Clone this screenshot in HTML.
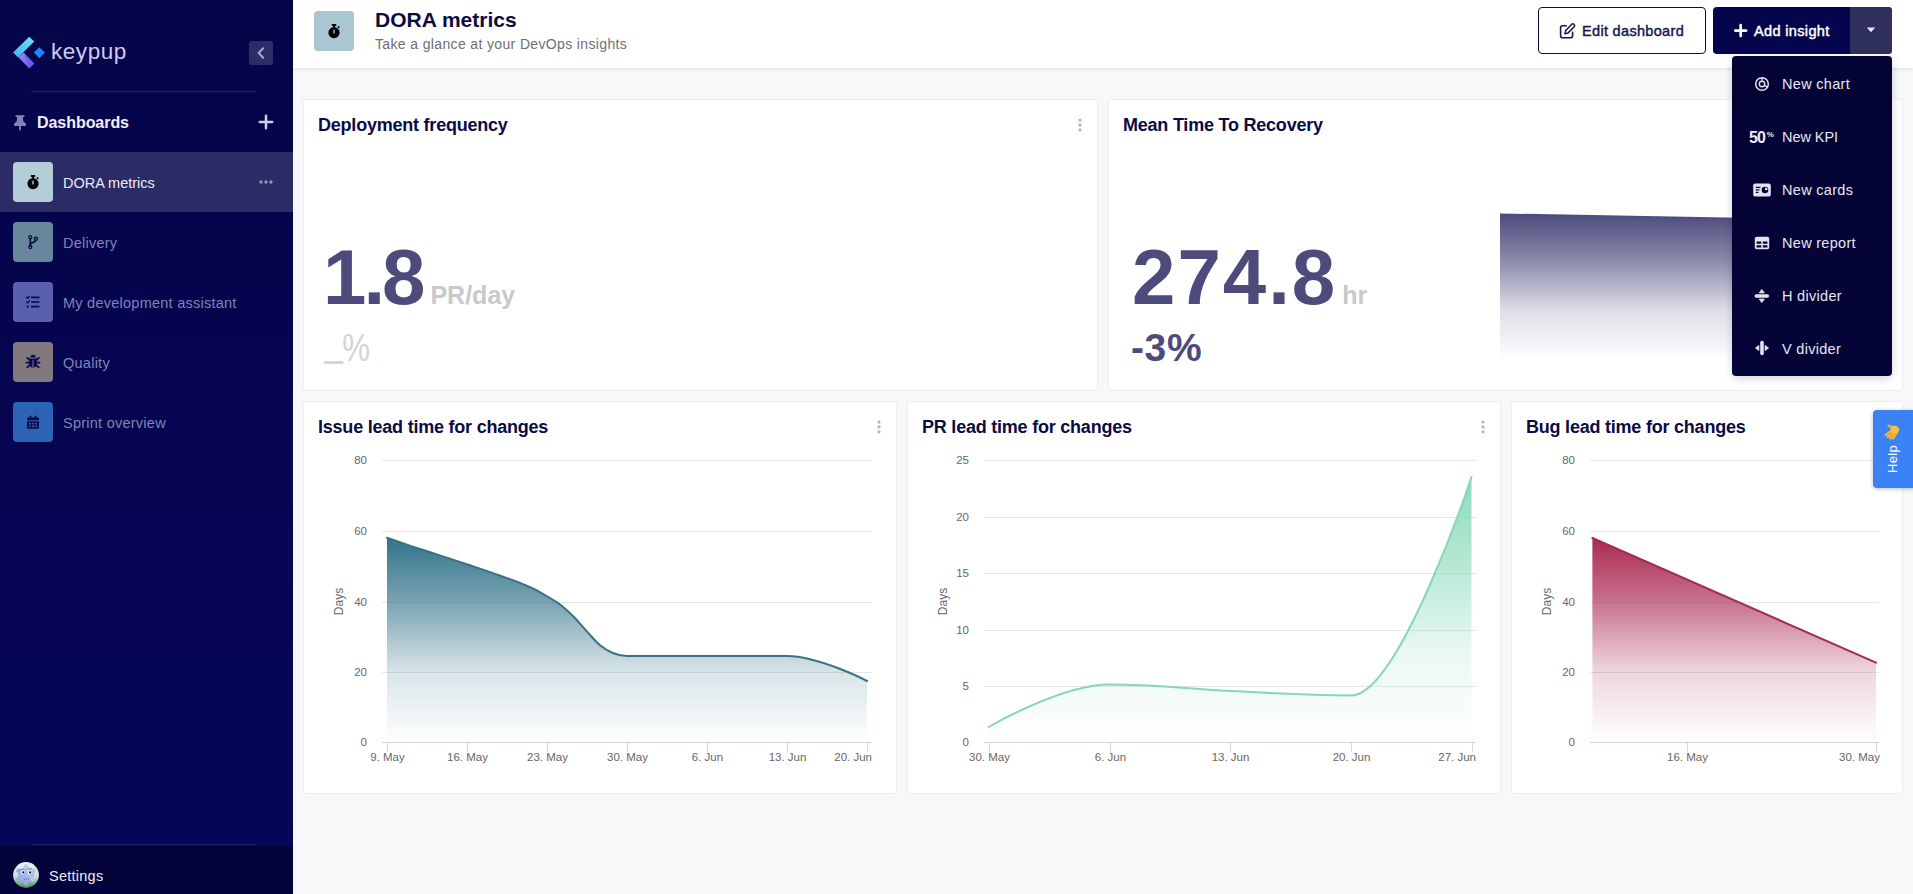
<!DOCTYPE html>
<html lang="en">
<head>
<meta charset="utf-8">
<title>DORA metrics - Keypup</title>
<style>
*{box-sizing:border-box;margin:0;padding:0}
html,body{width:1913px;height:894px;overflow:hidden}
body{font-family:"Liberation Sans",sans-serif;background:#f7f8fa;color:#0b0b45;position:relative}
.abs{position:absolute}
/* SIDEBAR */
#sidebar{position:absolute;left:0;top:0;width:293px;height:894px;background:linear-gradient(180deg,#05054a 0%,#060659 100%);color:#fff}
#sidebar .foot{position:absolute;left:0;top:846px;width:293px;height:48px;background:#03033c}
.hr{position:absolute;height:1px;background:#23236a}
.navitem{position:absolute;left:0;width:293px;height:60px}
.navitem.active{background:#2b2b65}
.navicon{position:absolute;left:13px;top:10px;width:40px;height:40px;border-radius:4px}
.navlabel{position:absolute;left:63px;top:1px;line-height:60px;font-size:14.5px;color:#8182b6;white-space:nowrap;letter-spacing:.25px}
.navitem.active .navlabel{color:#ecebf5;letter-spacing:0}
/* HEADER */
#header{position:absolute;left:293px;top:0;width:1620px;height:68px;background:#fff;box-shadow:0 1px 4px rgba(0,0,0,.11)}
/* CARDS */
.card{position:absolute;background:#fff;border:1px solid #ededee;border-radius:3px}
.ctitle{position:absolute;left:14px;top:15px;font-size:18px;font-weight:700;color:#0b0b45;white-space:nowrap;letter-spacing:-.22px}
.kpi{white-space:nowrap;line-height:90px}
.kpi .big{font-size:78px;font-weight:700;color:#4d4b7c;letter-spacing:-1px}
.kpi .unit{font-size:25px;font-weight:700;color:#c9c9c9;margin-left:8px}
.kdelta{font-size:39px;font-weight:700;color:#4d4b7c;line-height:46px;white-space:nowrap}
.mi{position:absolute;left:50px;font-size:14.500px;line-height:20px;color:#e6e6f2;white-space:nowrap;letter-spacing:.3px}
.kebab{position:absolute;width:4px}
.kebab i{display:block;width:3px;height:3px;border-radius:50%;background:#b9b9b9;margin-bottom:1.5px}
</style>
</head>
<body>
<div id="sidebar">
  <svg class="abs" style="left:10px;top:34px" width="40" height="38" viewBox="10 34 40 38">
    <defs>
      <linearGradient id="lgA" x1="0" y1="1" x2="1" y2="0"><stop offset="0" stop-color="#3fb6f2"/><stop offset="1" stop-color="#6fe0f7"/></linearGradient>
      <linearGradient id="lgB" x1="0" y1="0" x2="1" y2="1"><stop offset="0" stop-color="#9a8cfa"/><stop offset="1" stop-color="#6655e0"/></linearGradient>
    </defs>
    <polygon points="13,52.6 29.3,36.8 34.2,41.6 18.2,57.4" fill="url(#lgA)"/>
    <polygon points="18.4,57.2 23.6,52.4 34.2,63.6 29.3,68.6" fill="url(#lgB)"/>
    <polygon points="23.6,52.4 34.2,63.6 29.3,68.6" fill="#6a58e6" opacity=".55"/>
    <polygon points="39.3,47.2 44.8,52.6 39.3,58.2 33.8,52.6" fill="#2283ff"/>
  </svg>
  <div class="abs" id="logotxt" style="left:51px;top:35px;font-size:22.5px;line-height:34px;color:#cfcbee;letter-spacing:.55px">keypup</div>
  <div class="abs" style="left:249px;top:41px;width:24px;height:24px;border-radius:3px;background:#2c2c66">
    <svg width="24" height="24" viewBox="0 0 24 24"><path d="M14.2 7.2 L9.6 12 L14.2 16.8" fill="none" stroke="#a9a9cf" stroke-width="2" stroke-linecap="round" stroke-linejoin="round"/></svg>
  </div>
  <div class="hr" style="left:31px;top:91px;width:225px"></div>
  <svg class="abs" style="left:12px;top:114px" width="16" height="18" viewBox="0 0 16 18"><path d="M4.2 1.2h7.6a.9.9 0 0 1 0 1.8h-.9l.4 4.6c1.4.7 2.5 1.9 2.8 3.4.1.5-.3.9-.8.9H8.9v3.6a.9.9 0 0 1-1.8 0v-3.600H2.700c-.5 0-.9-.4-.8-.9.3-1.500 1.400-2.700 2.800-3.400l.4-4.600h-.900a.9.9 0 0 1 0-1.800z" fill="#8384b4"/></svg>
  <div class="abs" id="dashlbl" style="left:37px;top:112px;font-size:16px;font-weight:700;line-height:22px;color:#f1f0fa;letter-spacing:-.05px">Dashboards</div>
  <svg class="abs" style="left:258px;top:114px" width="16" height="16" viewBox="0 0 16 16"><path d="M8 1.800v12.400M1.800 8h12.400" stroke="#cfcfe8" stroke-width="2.500" stroke-linecap="round"/></svg>

  <div class="navitem active" style="top:152px">
    <div class="navicon" style="background:#b3ced8"><svg width="40" height="40" viewBox="0 0 40 40"><circle cx="20" cy="21.600" r="5.600" fill="#000"/><rect x="17.600" y="13.100" width="4.800" height="2" rx=".8" fill="#000"/><rect x="19.100" y="13.600" width="1.800" height="3" fill="#000"/><rect x="19.300" y="18.400" width="1.400" height="4.200" rx=".7" fill="#b3ced8"/><rect x="23.600" y="15.400" width="2.200" height="1.600" rx=".6" transform="rotate(45 24.700 16.200)" fill="#000"/></svg></div>
    <div class="navlabel">DORA metrics</div>
    <svg class="abs" style="left:258px;top:27px" width="16" height="6" viewBox="0 0 16 6"><circle cx="3" cy="3" r="1.650" fill="#9494bf"/><circle cx="8" cy="3" r="1.650" fill="#9494bf"/><circle cx="13" cy="3" r="1.650" fill="#9494bf"/></svg>
  </div>
  <div class="navitem" style="top:212px">
    <div class="navicon" style="background:#68879a"><svg width="40" height="40" viewBox="0 0 40 40"><g fill="none" stroke="#0a0a48" stroke-width="1.700"><path d="M17.300 16v8.400"/><path d="M17.300 22.300c0-2 5.600-1 5.600-4.700"/></g><g fill="#68879a" stroke="#0a0a48" stroke-width="1.300"><circle cx="17.300" cy="15.200" r="1.500"/><circle cx="17.300" cy="25" r="1.500"/><circle cx="22.900" cy="16.700" r="1.500"/></g></svg></div>
    <div class="navlabel">Delivery</div>
  </div>
  <div class="navitem" style="top:272px">
    <div class="navicon" style="background:#5a5fae"><svg width="40" height="40" viewBox="0 0 40 40"><g stroke="#0a0a48" stroke-width="1.700" stroke-linecap="round" fill="none"><path d="M18.800 15.400h7M18.800 20h7M18.800 24.600h7"/><path d="M13.600 15.300l1 1 1.800-2.100M13.600 19.900l1 1 1.800-2.100" stroke-width="1.300" stroke-linejoin="round"/></g><circle cx="14.800" cy="24.600" r="1.100" fill="#0a0a48"/></svg></div>
    <div class="navlabel">My development assistant</div>
  </div>
  <div class="navitem" style="top:332px">
    <div class="navicon" style="background:#81797d"><svg width="40" height="40" viewBox="0 0 40 40"><path d="M17.300 15.500a2.700 2.700 0 0 1 5.400 0z" fill="#0a0a48"/><path d="M16.200 16.600h7.600v5.200a3.800 3.800 0 0 1-7.600 0z" fill="#0a0a48"/><g stroke="#0a0a48" stroke-width="1.800" stroke-linecap="round"><path d="M16.200 20.600h-2.800M23.800 20.600h2.800M16.400 17.800l-2.200-2M23.600 17.800l2.200-2M16.600 23.200l-2.200 2.200M23.400 23.200l2.200 2.200"/></g><path d="M20 17.600v7.600" stroke="#81797d" stroke-width="1"/></svg></div>
    <div class="navlabel">Quality</div>
  </div>
  <div class="navitem" style="top:392px">
    <div class="navicon" style="background:#2d63b4"><svg width="40" height="40" viewBox="0 0 40 40"><path d="M14 16.800a1.400 1.400 0 0 1 1.400-1.400h9.200a1.400 1.400 0 0 1 1.400 1.400v1.400H14z" fill="#0a0a48"/><path d="M14 19.200h12v6.200a1.400 1.400 0 0 1-1.400 1.400h-9.200a1.400 1.400 0 0 1-1.400-1.400z" fill="#0a0a48"/><rect x="16.600" y="13.400" width="1.700" height="3.400" rx=".8" fill="#0a0a48"/><rect x="21.700" y="13.400" width="1.700" height="3.400" rx=".8" fill="#0a0a48"/><g fill="#2d63b4"><rect x="15.900" y="20.700" width="1.900" height="1.700"/><rect x="19.050" y="20.700" width="1.900" height="1.700"/><rect x="22.200" y="20.700" width="1.900" height="1.700"/><rect x="15.900" y="23.500" width="1.900" height="1.700"/><rect x="19.050" y="23.500" width="1.900" height="1.700"/><rect x="22.200" y="23.500" width="1.900" height="1.700"/></g></svg></div>
    <div class="navlabel">Sprint overview</div>
  </div>

  <div class="foot"></div>
  <div class="hr" style="left:31px;top:844px;width:225px"></div>
  <svg class="abs" style="left:12px;top:861px" width="28" height="28" viewBox="0 0 28 28">
    <defs><linearGradient id="av" x1="0" y1="0" x2="0" y2="1"><stop offset="0" stop-color="#eef3ef"/><stop offset=".55" stop-color="#cfe0d2"/><stop offset=".8" stop-color="#7fb487"/><stop offset="1" stop-color="#3f8f4c"/></linearGradient>
    <linearGradient id="avb" x1="0" y1="0" x2="0" y2="1"><stop offset="0" stop-color="#b9c8f4"/><stop offset="1" stop-color="#93a8ea"/></linearGradient></defs>
    <circle cx="14" cy="14" r="12.900" fill="url(#av)"/>
    <g fill="url(#avb)"><circle cx="14" cy="14" r="8.200"/><rect x="12" y="3.400" width="4" height="21.200" rx="1"/><rect x="12" y="3.400" width="4" height="21.200" rx="1" transform="rotate(60 14 14)"/><rect x="12" y="3.400" width="4" height="21.200" rx="1" transform="rotate(120 14 14)"/></g>
    <ellipse cx="10.800" cy="11.300" rx="1.700" ry="2.300" fill="#fff"/><ellipse cx="17.600" cy="11.300" rx="1.700" ry="2.300" fill="#fff"/>
    <circle cx="11.200" cy="11.400" r="1.050" fill="#0a0a18"/><circle cx="18" cy="11.400" r="1.050" fill="#0a0a18"/>
    <path d="M8.300 8.300l3.900.600M16.100 8.500l3.700-.900" stroke="#5c6488" stroke-width=".7" fill="none"/>
    <path d="M11.500 17.500l1 .9 1-.9 1 .9 1-.9 1 .9 1-.9" stroke="#4a64b8" stroke-width=".7" fill="none"/>
  </svg>
  <div class="abs" id="settings" style="left:49px;top:866px;font-size:14.500px;line-height:20px;color:#ecebf7;letter-spacing:.25px">Settings</div>
</div>
<div id="header">
  <div class="abs" style="left:21px;top:11px;width:40px;height:40px;border-radius:4px;background:#a9c6d1"><svg width="40" height="40" viewBox="0 0 40 40"><circle cx="20" cy="21.600" r="5.600" fill="#000"/><rect x="17.600" y="13.100" width="4.800" height="2" rx=".8" fill="#000"/><rect x="19.100" y="13.600" width="1.800" height="3" fill="#000"/><rect x="19.300" y="18.400" width="1.400" height="4.200" rx=".7" fill="#a9c6d1"/><rect x="23.600" y="15.400" width="2.200" height="1.600" rx=".6" transform="rotate(45 24.700 16.200)" fill="#000"/></svg></div>
  <div class="abs" id="htitle" style="left:82px;top:6px;font-size:21px;font-weight:700;line-height:28px;color:#0b0b45;white-space:nowrap">DORA metrics</div>
  <div class="abs" id="hsub" style="left:82px;top:34px;font-size:14px;line-height:20px;color:#6f6f6f;white-space:nowrap;letter-spacing:.36px">Take a glance at your DevOps insights</div>
  <div class="abs" id="btnedit" style="left:1245px;top:7px;width:168px;height:47px;border:1.500px solid #0b0b45;border-radius:4px;background:#fff">
    <svg class="abs" style="left:19px;top:14px" width="19" height="19" viewBox="0 0 19 19"><path d="M8.200 3.800H4.600a2 2 0 0 0-2 2v8a2 2 0 0 0 2 2h8a2 2 0 0 0 2-2v-3.600" fill="none" stroke="#17174f" stroke-width="1.600" stroke-linecap="round"/><path d="M13.700 2.300a1.500 1.500 0 0 1 2.100 0l.4.400a1.500 1.500 0 0 1 0 2.100l-6.300 6.300-3 .7.700-3z" fill="none" stroke="#17174f" stroke-width="1.500" stroke-linejoin="round"/></svg>
    <div class="abs" id="edittxt" style="left:43px;top:12.500px;font-size:14.500px;font-weight:400;-webkit-text-stroke:.45px #17174f;line-height:20px;color:#17174f;white-space:nowrap;letter-spacing:.32px">Edit dashboard</div>
  </div>
  <div class="abs" id="btnadd" style="left:1420px;top:7px;width:179px;height:47px;border-radius:4px;background:#05054d;overflow:hidden">
    <div class="abs" style="left:137px;top:0;width:42px;height:47px;background:#2f2f5e"></div>
    <svg class="abs" style="left:20px;top:16px" width="15" height="15" viewBox="0 0 15 15"><path d="M7.700 2.200v10.800M2.300 7.600h10.800" stroke="#fff" stroke-width="2.700" stroke-linecap="round"/></svg>
    <div class="abs" id="addtxt" style="left:41px;top:13.500px;font-size:14.500px;font-weight:400;-webkit-text-stroke:.45px #fff;line-height:20px;color:#fff;white-space:nowrap;letter-spacing:.35px">Add insight</div>
    <svg class="abs" style="left:153px;top:20px" width="10" height="6" viewBox="0 0 10 6"><path d="M.8.600h8.400L5 5.200z" fill="#e8e8f4"/></svg>
  </div>
</div>
<div id="main">
  <div class="card" id="c1" style="left:303px;top:99px;width:795px;height:292px"><div class="ctitle">Deployment frequency</div>
    <svg class="abs" style="left:773px;top:17px" width="6" height="16" viewBox="0 0 6 16"><circle cx="3" cy="3.100" r="1.600" fill="#b4b4b4"/><circle cx="3" cy="7.950" r="1.600" fill="#b4b4b4"/><circle cx="3" cy="12.800" r="1.600" fill="#b4b4b4"/></svg>
    <div class="abs kpi" id="k1" style="left:19px;top:132px"><span class="big" style="letter-spacing:-3px">1.8</span><span class="unit">PR/day</span></div>
    <div class="abs kdelta" id="d1" style="left:21px;top:225px;color:#d4d4d4;font-weight:400;transform:scaleX(.8);transform-origin:0 0"><span style="position:relative;top:-2.400px;font-weight:700;-webkit-text-stroke:1.100px #d4d4d4">_</span>%</div></div>
  <div class="card" id="c2" style="left:1108px;top:99px;width:795px;height:292px"><div class="ctitle">Mean Time To Recovery</div>
    <div class="abs kpi" id="k2" style="left:23px;top:132px"><span class="big" style="letter-spacing:2px">274.8</span><span class="unit" style="margin-left:5px">hr</span></div>
    <div class="abs kdelta" id="d2" style="left:22px;top:225px;letter-spacing:.6px">-3%</div></div>
  <div class="card" id="c3" style="left:303px;top:401px;width:594px;height:393px"><div class="ctitle">Issue lead time for changes</div><svg class="abs" style="left:572px;top:17px" width="6" height="16" viewBox="0 0 6 16"><circle cx="3" cy="3.100" r="1.600" fill="#b4b4b4"/><circle cx="3" cy="7.950" r="1.600" fill="#b4b4b4"/><circle cx="3" cy="12.800" r="1.600" fill="#b4b4b4"/></svg></div>
  <div class="card" id="c4" style="left:907px;top:401px;width:594px;height:393px"><div class="ctitle">PR lead time for changes</div><svg class="abs" style="left:572px;top:17px" width="6" height="16" viewBox="0 0 6 16"><circle cx="3" cy="3.100" r="1.600" fill="#b4b4b4"/><circle cx="3" cy="7.950" r="1.600" fill="#b4b4b4"/><circle cx="3" cy="12.800" r="1.600" fill="#b4b4b4"/></svg></div>
  <div class="card" id="c5" style="left:1511px;top:401px;width:392px;height:393px"><div class="ctitle">Bug lead time for changes</div></div>
</div>
<!--CHARTS-->
<svg id="charts" class="abs" style="left:0;top:0" width="1913" height="894" viewBox="0 0 1913 894" font-family="'Liberation Sans',sans-serif">
<defs>
<linearGradient id="g3" x1="0" y1="0" x2="0" y2="1"><stop offset="0" stop-color="#33738a" stop-opacity="1.00"/><stop offset="0.31" stop-color="#33738a" stop-opacity="0.66"/><stop offset="0.655" stop-color="#33738a" stop-opacity="0.19"/><stop offset="1" stop-color="#33738a" stop-opacity="0.00"/></linearGradient>
<linearGradient id="g4" x1="0" y1="0" x2="0" y2="1"><stop offset="0" stop-color="#86d9b8" stop-opacity="0.95"/><stop offset="0.31" stop-color="#86d9b8" stop-opacity="0.63"/><stop offset="0.655" stop-color="#86d9b8" stop-opacity="0.18"/><stop offset="1" stop-color="#86d9b8" stop-opacity="0.00"/></linearGradient>
<linearGradient id="g5" x1="0" y1="0" x2="0" y2="1"><stop offset="0" stop-color="#aa2a52" stop-opacity="1.00"/><stop offset="0.31" stop-color="#aa2a52" stop-opacity="0.66"/><stop offset="0.655" stop-color="#aa2a52" stop-opacity="0.19"/><stop offset="1" stop-color="#aa2a52" stop-opacity="0.00"/></linearGradient>
<linearGradient id="g2" x1="0" y1="0" x2="0" y2="1"><stop offset="0" stop-color="#4e4c7e" stop-opacity="1.00"/><stop offset="0.31" stop-color="#4e4c7e" stop-opacity="0.66"/><stop offset="0.655" stop-color="#4e4c7e" stop-opacity="0.19"/><stop offset="1" stop-color="#4e4c7e" stop-opacity="0.00"/></linearGradient>
</defs>
<g id="ch3"><path d="M382 460.5H872" stroke="#e6e6e6" stroke-width="1"/>
<text x="367" y="464.3" text-anchor="end" font-size="11.5" fill="#666">80</text>
<path d="M382 531.5H872" stroke="#e6e6e6" stroke-width="1"/>
<text x="367" y="535.3" text-anchor="end" font-size="11.5" fill="#666">60</text>
<path d="M382 602.5H872" stroke="#e6e6e6" stroke-width="1"/>
<text x="367" y="606.3" text-anchor="end" font-size="11.5" fill="#666">40</text>
<path d="M382 672.5H872" stroke="#e6e6e6" stroke-width="1"/>
<text x="367" y="676.3" text-anchor="end" font-size="11.5" fill="#666">20</text>
<text x="367" y="746.3" text-anchor="end" font-size="11.5" fill="#666">0</text>
<text transform="translate(343 601.5) rotate(-90)" text-anchor="middle" font-size="12" fill="#666">Days</text>
<g transform="translate(-.5 0)"><path d="M387.5 537.8 C387.5 537.8 401.1 542.6 410.2 545.6 C422.3 549.6 428.3 551.5 440.4 555.4 C452.5 559.3 458.5 561.2 470.6 565.3 C482.7 569.4 488.7 571.4 500.8 575.8 C512.9 580.2 518.9 582.0 531.0 587.4 C539.1 591.0 543.1 593.8 551.2 598.5 C554.8 600.6 556.7 601.4 560.3 604.3 C565.7 608.5 568.3 610.9 573.7 616.3 C579.1 621.7 581.7 625.3 587.1 631.1 C592.5 636.9 595.1 640.8 600.5 645.2 C605.9 649.6 608.6 651.1 614.0 653.2 C619.4 655.3 622.1 655.9 627.5 655.9 C659.5 655.9 675.5 655.9 707.5 655.9 C739.5 655.9 755.5 655.9 787.5 656.0 C819.5 656.1 867.5 681.0 867.5 681.0 L867.5 742.5 L387.5 742.5 Z" fill="url(#g3)"/>
<path d="M387.5 537.8 C387.5 537.8 401.1 542.6 410.2 545.6 C422.3 549.6 428.3 551.5 440.4 555.4 C452.5 559.3 458.5 561.2 470.6 565.3 C482.7 569.4 488.7 571.4 500.8 575.8 C512.9 580.2 518.9 582.0 531.0 587.4 C539.1 591.0 543.1 593.8 551.2 598.5 C554.8 600.6 556.7 601.4 560.3 604.3 C565.7 608.5 568.3 610.9 573.7 616.3 C579.1 621.7 581.7 625.3 587.1 631.1 C592.5 636.9 595.1 640.8 600.5 645.2 C605.9 649.6 608.6 651.1 614.0 653.2 C619.4 655.3 622.1 655.9 627.5 655.9 C659.5 655.9 675.5 655.9 707.5 655.9 C739.5 655.9 755.5 655.9 787.5 656.0 C819.5 656.1 867.5 681.0 867.5 681.0" fill="none" stroke="#3a7186" stroke-width="2" stroke-linejoin="round" stroke-linecap="round"/></g>
<path d="M382 742.5H872" stroke="#cfd4e0" stroke-width="1"/>
<path d="M387.5 742.5V752.0" stroke="#d4d6dc" stroke-width="1"/>
<path d="M467.5 742.5V752.0" stroke="#d4d6dc" stroke-width="1"/>
<path d="M547.5 742.5V752.0" stroke="#d4d6dc" stroke-width="1"/>
<path d="M627.5 742.5V752.0" stroke="#d4d6dc" stroke-width="1"/>
<path d="M707.5 742.5V752.0" stroke="#d4d6dc" stroke-width="1"/>
<path d="M787.5 742.5V752.0" stroke="#d4d6dc" stroke-width="1"/>
<path d="M867.5 742.5V752.0" stroke="#d4d6dc" stroke-width="1"/>
<text x="387.5" y="761" text-anchor="middle" font-size="11.5" fill="#666">9. May</text>
<text x="467.5" y="761" text-anchor="middle" font-size="11.5" fill="#666">16. May</text>
<text x="547.5" y="761" text-anchor="middle" font-size="11.5" fill="#666">23. May</text>
<text x="627.5" y="761" text-anchor="middle" font-size="11.5" fill="#666">30. May</text>
<text x="707.5" y="761" text-anchor="middle" font-size="11.5" fill="#666">6. Jun</text>
<text x="787.5" y="761" text-anchor="middle" font-size="11.5" fill="#666">13. Jun</text>
<text x="872" y="761" text-anchor="end" font-size="11.5" fill="#666">20. Jun</text></g>
<g id="ch4"><path d="M984 460.5H1476" stroke="#e6e6e6" stroke-width="1"/>
<text x="969" y="464.3" text-anchor="end" font-size="11.5" fill="#666">25</text>
<path d="M984 517.5H1476" stroke="#e6e6e6" stroke-width="1"/>
<text x="969" y="521.3" text-anchor="end" font-size="11.5" fill="#666">20</text>
<path d="M984 573.5H1476" stroke="#e6e6e6" stroke-width="1"/>
<text x="969" y="577.3" text-anchor="end" font-size="11.5" fill="#666">15</text>
<path d="M984 630.5H1476" stroke="#e6e6e6" stroke-width="1"/>
<text x="969" y="634.3" text-anchor="end" font-size="11.5" fill="#666">10</text>
<path d="M984 686.5H1476" stroke="#e6e6e6" stroke-width="1"/>
<text x="969" y="690.3" text-anchor="end" font-size="11.5" fill="#666">5</text>
<text x="969" y="746.3" text-anchor="end" font-size="11.5" fill="#666">0</text>
<text transform="translate(947 601.5) rotate(-90)" text-anchor="middle" font-size="12" fill="#666">Days</text>
<g transform="translate(-.5 0)"><path d="M989.2 727.0 C989.2 727.0 1061.7 684.5 1110.1 684.5 C1158.5 684.5 1182.6 688.8 1231.0 691.0 C1279.2 693.2 1303.3 695.5 1351.5 695.5 C1399.7 695.5 1472.0 477.0 1472.0 477.0 L1472 742.5 L989.2 742.5 Z" fill="url(#g4)"/>
<path d="M989.2 727.0 C989.2 727.0 1061.7 684.5 1110.1 684.5 C1158.5 684.5 1182.6 688.8 1231.0 691.0 C1279.2 693.2 1303.3 695.5 1351.5 695.5 C1399.7 695.5 1472.0 477.0 1472.0 477.0" fill="none" stroke="#86d6b7" stroke-width="2" stroke-linejoin="round" stroke-linecap="round"/></g>
<path d="M984 742.5H1476" stroke="#cfd4e0" stroke-width="1"/>
<path d="M989.5 742.5V752.0" stroke="#d4d6dc" stroke-width="1"/>
<path d="M1110.5 742.5V752.0" stroke="#d4d6dc" stroke-width="1"/>
<path d="M1230.5 742.5V752.0" stroke="#d4d6dc" stroke-width="1"/>
<path d="M1351.5 742.5V752.0" stroke="#d4d6dc" stroke-width="1"/>
<path d="M1472.5 742.5V752.0" stroke="#d4d6dc" stroke-width="1"/>
<text x="989.5" y="761" text-anchor="middle" font-size="11.5" fill="#666">30. May</text>
<text x="1110.5" y="761" text-anchor="middle" font-size="11.5" fill="#666">6. Jun</text>
<text x="1230.5" y="761" text-anchor="middle" font-size="11.5" fill="#666">13. Jun</text>
<text x="1351.5" y="761" text-anchor="middle" font-size="11.5" fill="#666">20. Jun</text>
<text x="1476" y="761" text-anchor="end" font-size="11.5" fill="#666">27. Jun</text></g>
<g id="ch5"><path d="M1590 460.5H1879" stroke="#e6e6e6" stroke-width="1"/>
<text x="1575" y="464.3" text-anchor="end" font-size="11.5" fill="#666">80</text>
<path d="M1590 531.5H1879" stroke="#e6e6e6" stroke-width="1"/>
<text x="1575" y="535.3" text-anchor="end" font-size="11.5" fill="#666">60</text>
<path d="M1590 602.5H1879" stroke="#e6e6e6" stroke-width="1"/>
<text x="1575" y="606.3" text-anchor="end" font-size="11.5" fill="#666">40</text>
<path d="M1590 672.5H1879" stroke="#e6e6e6" stroke-width="1"/>
<text x="1575" y="676.3" text-anchor="end" font-size="11.5" fill="#666">20</text>
<text x="1575" y="746.3" text-anchor="end" font-size="11.5" fill="#666">0</text>
<text transform="translate(1551 601.5) rotate(-90)" text-anchor="middle" font-size="12" fill="#666">Days</text>
<g transform="translate(-.5 0)"><path d="M1592.9 538 L1876.5 662.6 L1876.5 742.5 L1592.9 742.5 Z" fill="url(#g5)"/>
<path d="M1592.9 538 L1876.5 662.6" fill="none" stroke="#a32c50" stroke-width="2" stroke-linejoin="round" stroke-linecap="round"/></g>
<path d="M1590 742.5H1879" stroke="#cfd4e0" stroke-width="1"/>
<path d="M1687.5 742.5V752.0" stroke="#d4d6dc" stroke-width="1"/>
<path d="M1876.5 742.5V752.0" stroke="#d4d6dc" stroke-width="1"/>
<text x="1687.5" y="761" text-anchor="middle" font-size="11.5" fill="#666">16. May</text>
<text x="1880" y="761" text-anchor="end" font-size="11.5" fill="#666">30. May</text></g>
<g id="ch2"><path d="M1500 214.4 L1888 221.6 L1888 360 L1500 360 Z" fill="url(#g2)"/><path d="M1500 214.4 L1888 221.6" stroke="#4e4c7e" stroke-width="2" fill="none"/></g>
</svg>
<!--/CHARTS-->
<div id="menu" class="abs" style="left:1732px;top:56px;width:160px;height:320px;border-radius:4px;background:#030336;box-shadow:0 2px 8px rgba(0,0,40,.18)">
  <div class="mi" style="top:18px">New chart</div>
  <div class="mi" style="top:71px;letter-spacing:-.05px">New KPI</div>
  <div class="mi" style="top:124px">New cards</div>
  <div class="mi" style="top:177px">New report</div>
  <div class="mi" style="top:230px">H divider</div>
  <div class="mi" style="top:283px">V divider</div>
  <svg class="abs" style="left:21px;top:19px" width="18" height="18" viewBox="0 0 18 18"><circle cx="9" cy="9" r="6.300" fill="none" stroke="#e2e2f0" stroke-width="1.500"/><circle cx="9" cy="9" r="2.700" fill="none" stroke="#e2e2f0" stroke-width="1.400"/><path d="M9 2.700v3.600M11.400 10.400l3.100 1.900" stroke="#e2e2f0" stroke-width="1.400"/></svg>
  <div class="abs" id="kpi50" style="left:17px;top:72px;font-size:16px;font-weight:700;line-height:20px;color:#ecebf5;letter-spacing:-.8px;white-space:nowrap">50<span style="font-size:8px;position:relative;top:-6.500px;letter-spacing:0;margin-left:1.500px;font-weight:700">%</span></div>
  <svg class="abs" style="left:20px;top:125px" width="20" height="18" viewBox="0 0 20 18"><rect x="1.200" y="2.400" width="17.600" height="13.200" rx="2.200" fill="#e2e2f0"/><path d="M3.800 6.400h4.600M3.800 8.900h3.600M3.800 11.400h2.600" stroke="#030336" stroke-width="1.300"/><circle cx="13" cy="9" r="3.300" fill="#030336"/><path d="M13 9V6.400a2.600 2.600 0 0 1 2.600 2.600z" fill="#e2e2f0"/></svg>
  <svg class="abs" style="left:21px;top:178px" width="18" height="18" viewBox="0 0 18 18"><rect x="1.800" y="2.800" width="14.400" height="12.400" rx="1.800" fill="#e2e2f0"/><path d="M3.600 7.400h4.600v2.400H3.600zM9.800 7.400h4.600v2.400H9.800zM3.600 11.200h4.600v2.200H3.600zM9.800 11.200h4.600v2.200H9.800z" fill="#030336"/></svg>
  <svg class="abs" style="left:21px;top:231px" width="18" height="18" viewBox="0 0 18 18"><rect x="1.500" y="7.200" width="14.600" height="3.600" rx="1.800" fill="#e2e2f0"/><path d="M8.800 2.300l2.700 3.700H6.100zM8.800 15.700l2.700-3.700H6.100z" fill="#e2e2f0" stroke="#e2e2f0" stroke-width=".6" stroke-linejoin="round"/></svg>
  <svg class="abs" style="left:21px;top:283px" width="18" height="18" viewBox="0 0 18 18"><rect x="7.200" y="1.700" width="3.600" height="14.600" rx="1.800" fill="#e2e2f0"/><path d="M2.300 9l3.700-2.700v5.400zM15.700 9l-3.700-2.700v5.400z" fill="#e2e2f0" stroke="#e2e2f0" stroke-width=".6" stroke-linejoin="round"/></svg>
</div>
<div id="help" class="abs" style="left:1873px;top:410px;width:44px;height:78px;border-radius:4px;background:#3b82f6;box-shadow:0 1px 4px rgba(0,0,0,.25)">
  <div class="abs" style="left:-20px;top:38.500px;width:80px;height:20px;line-height:20px;text-align:center;transform:rotate(-90deg);transform-origin:50% 50%;color:#fff;font-size:13px;letter-spacing:.3px">Help</div>
  <svg class="abs" style="left:11px;top:14px" width="17" height="17" viewBox="0 0 17 17"><g stroke="#f3b62f" stroke-width="2.300" stroke-linecap="round" fill="none"><path d="M8.300 6.200L1.600 10.900"/><path d="M9.600 7.600L3.600 12.900"/><path d="M11 8.600L6 14.300"/><path d="M12.500 9L8.800 14.600"/><path d="M8 3.400L4.600 1.700"/></g><ellipse cx="10.800" cy="5.600" rx="4.300" ry="3.800" transform="rotate(30 10.800 5.600)" fill="#f7c340"/><path d="M3.300 11.300L8.600 7.300M5.400 13.300L10 8.700M8 14.400L11.600 9.500" stroke="#d9961c" stroke-width=".5" fill="none"/></svg>
</div>
</body>
</html>
